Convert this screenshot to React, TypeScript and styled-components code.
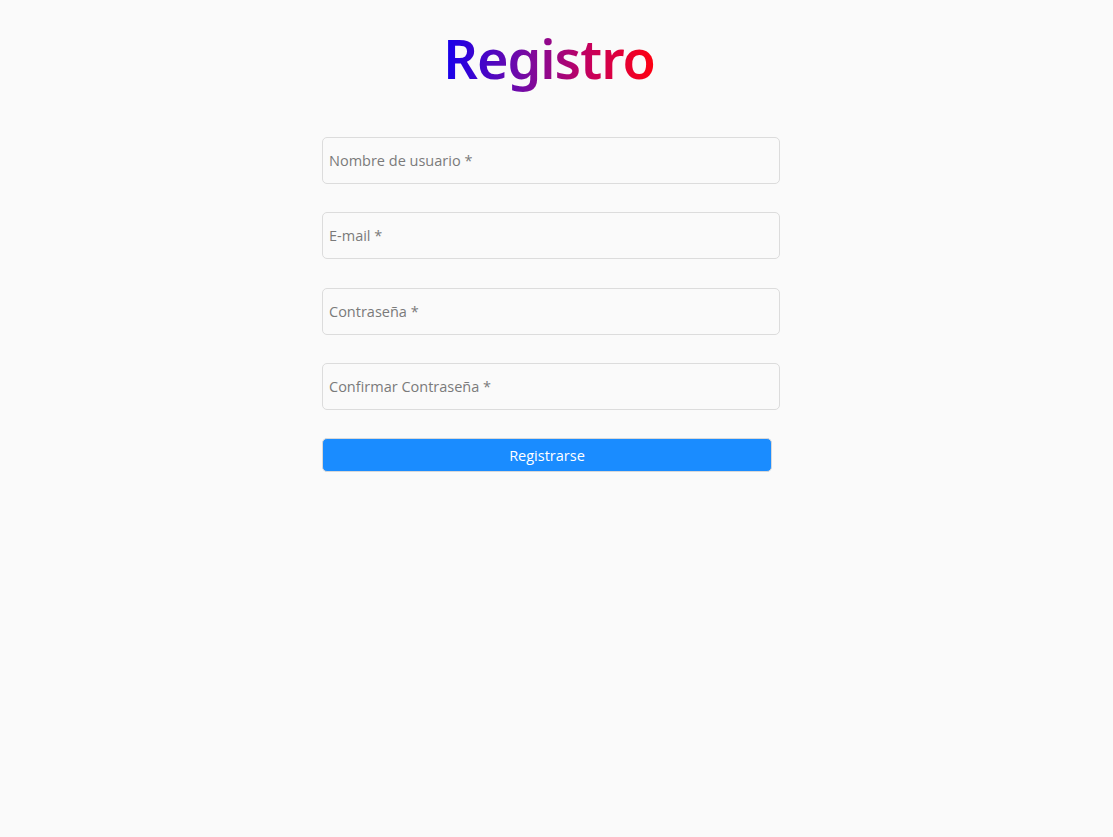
import React from "react";
import styled, { createGlobalStyle } from "styled-components";

const Global = createGlobalStyle`
  html, body { margin: 0; padding: 0; background: #fafafa; }
  body { font-family: "Open Sans", "Noto Sans", sans-serif; }
`;

const Page = styled.main`
  min-height: 837px;
  display: flex;
  flex-direction: column;
  align-items: center;
  padding-top: 20px;
  padding-right: 15px;
  box-sizing: border-box;
`;

const Title = styled.h1`
  margin: 0;
  font-family: "Noto Sans", "Open Sans", sans-serif;
  font-weight: 600;
  font-size: 54px;
  line-height: 76px;
  letter-spacing: -1px;
  background: linear-gradient(90deg, #1400ee 0%, #7a0aa0 40%, #c8005a 70%, #ff0010 100%);
  -webkit-background-clip: text;
  background-clip: text;
  color: transparent;
`;

const Form = styled.form`
  margin-top: 41px;
  width: 458px;
  margin-left: 4px;
  display: flex;
  flex-direction: column;
  gap: 28.3px;
`;

const Input = styled.input`
  box-sizing: border-box;
  width: 100%;
  height: 47px;
  border: 1px solid #dcdcdc;
  border-radius: 5px;
  background: #fafafa;
  padding: 0 6px;
  font-family: "Open Sans", sans-serif;
  font-size: 14.5px;
  color: #333;
  outline: none;
  &::placeholder { color: #7a7a7a; }
`;

const Button = styled.button`
  box-sizing: border-box;
  width: 450px;
  height: 34px;
  border: 1px solid #d8d8d8;
  border-radius: 5px;
  background: #1a8cff;
  color: #fff;
  font-family: "Open Sans", sans-serif;
  font-size: 14.5px;
  font-weight: 500;
  cursor: pointer;
`;

export default function App() {
  return (
    <>
      <Global />
      <Page>
        <Title>Registro</Title>
        <Form onSubmit={(e) => e.preventDefault()}>
          <Input placeholder="Nombre de usuario *" />
          <Input placeholder="E-mail *" />
          <Input type="password" placeholder="Contraseña *" />
          <Input type="password" placeholder="Confirmar Contraseña *" />
          <Button type="submit">Registrarse</Button>
        </Form>
      </Page>
    </>
  );
}
